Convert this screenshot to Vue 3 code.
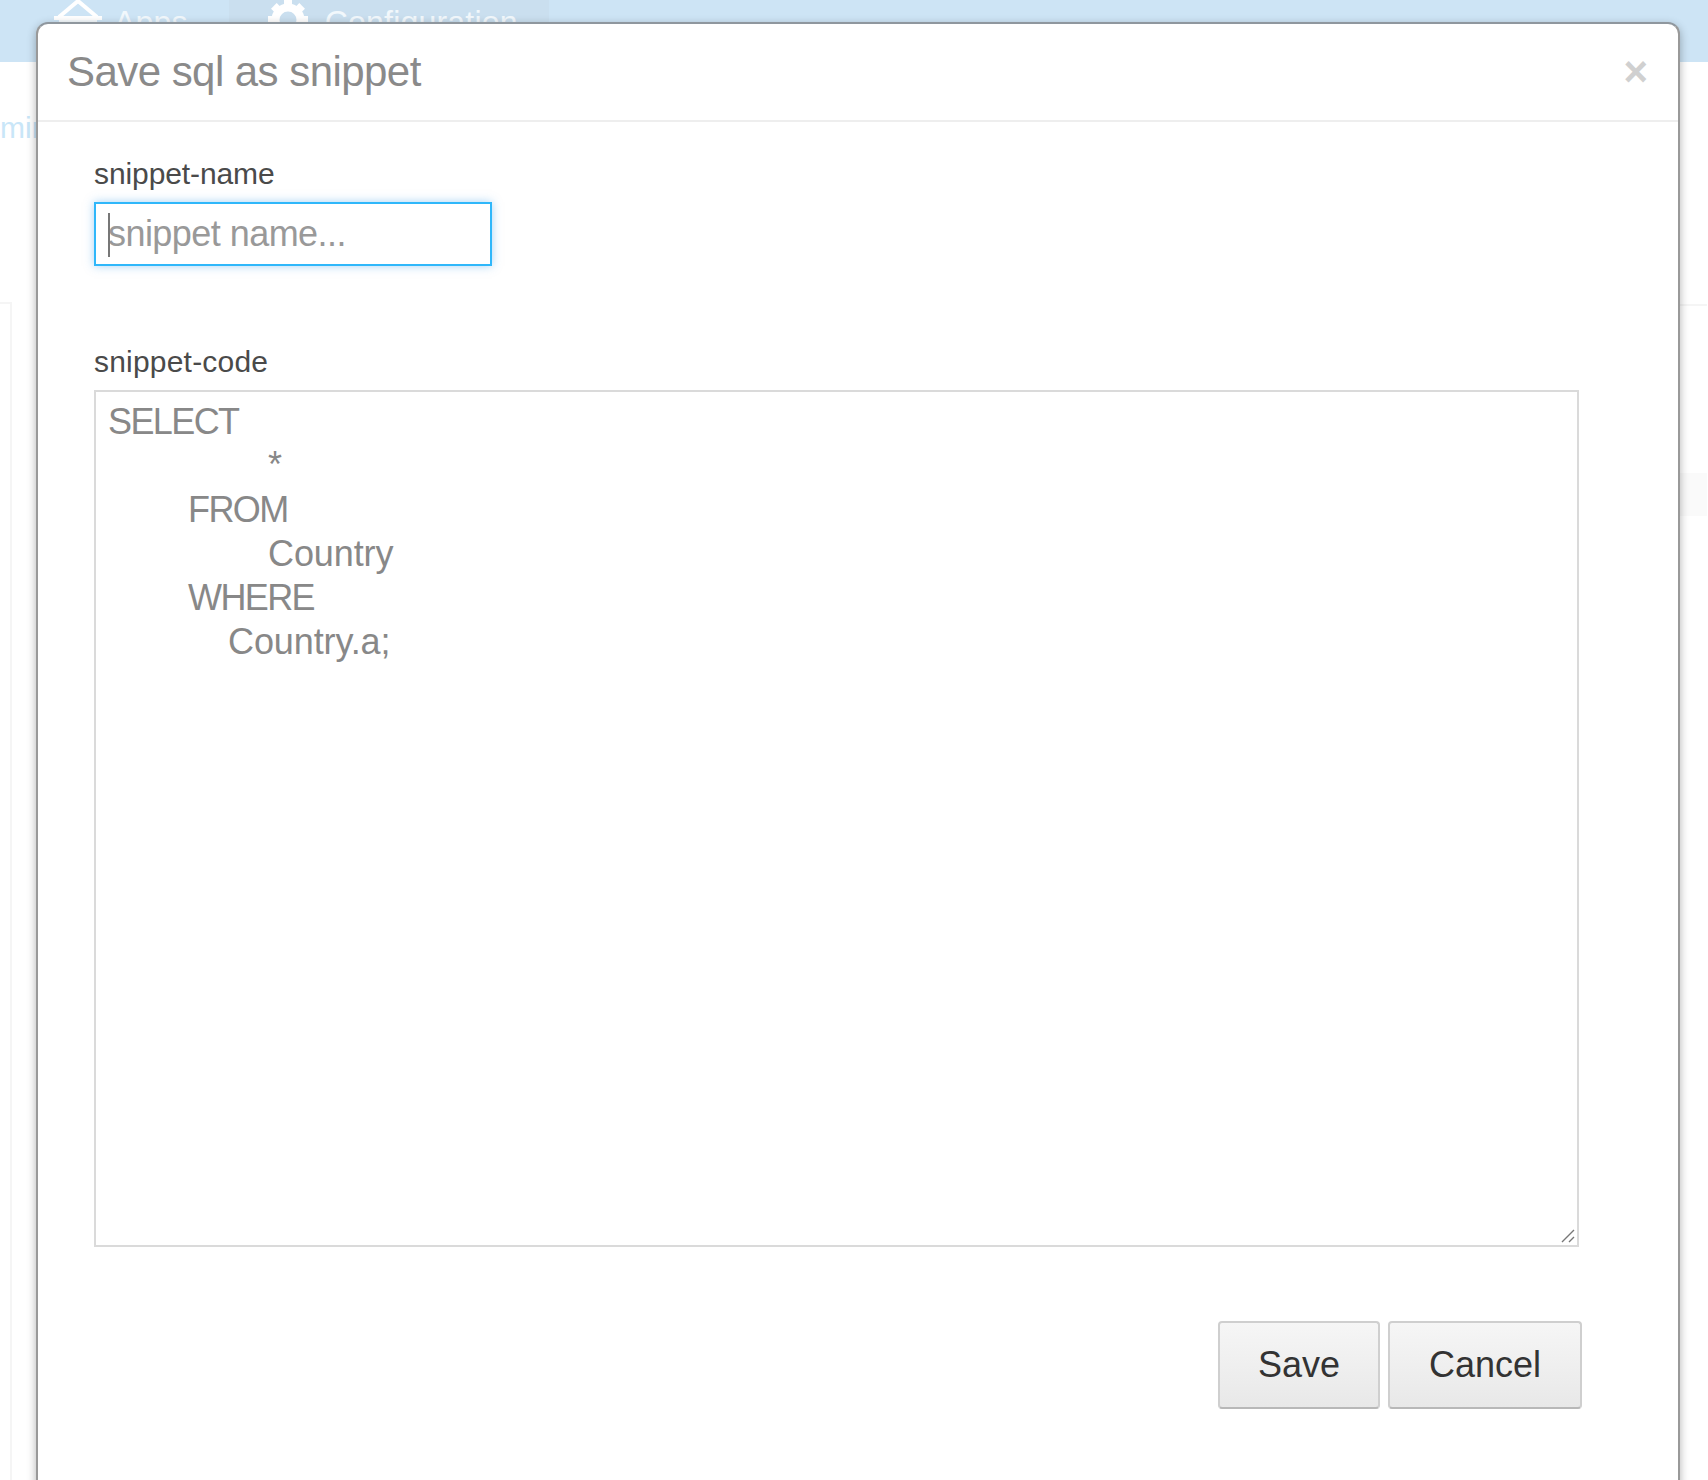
<script setup>
const lines = [
  { text: 'SELECT', cls: 'l0 caps' },
  { text: '*', cls: 'l2 star' },
  { text: 'FROM', cls: 'l1 caps' },
  { text: 'Country', cls: 'l2' },
  { text: 'WHERE', cls: 'l1 caps' },
  { text: 'Country.a;', cls: 'l3' }
];
</script>

<template>
  <div class="page">
    <header class="topbar">
      <div class="nav-item">
        <svg class="home" width="48" height="30" viewBox="0 0 48 30"><path d="M5 17 L24 1 L43 17" fill="none" stroke="#fff" stroke-width="4"/><rect x="0" y="16" width="48" height="4" fill="#fff"/><rect x="5" y="20" width="38" height="10" fill="#f4f9fc"/></svg>
        <span>Apps</span>
      </div>
      <div class="nav-item active">
        <svg class="gear" width="42" height="40" viewBox="0 0 42 40"><circle cx="21" cy="20" r="12.5" fill="none" stroke="#fff" stroke-width="8"/><g fill="#fff"><rect x="17" y="0" width="8" height="8"/><rect x="17" y="0" width="8" height="8" transform="rotate(45 21 20)"/><rect x="17" y="0" width="8" height="8" transform="rotate(-45 21 20)"/><rect x="17" y="0" width="8" height="8" transform="rotate(90 21 20)"/><rect x="17" y="0" width="8" height="8" transform="rotate(-90 21 20)"/></g></svg>
        <span>Configuration</span>
      </div>
    </header>
    <span class="peek">min</span>
    <div class="side-panel"></div>
    <div class="right-line"></div>
    <div class="right-row"></div>

    <section class="modal">
      <div class="modal-header">
        <h3>Save sql as snippet</h3>
        <span class="close">×</span>
      </div>
      <div class="modal-body">
        <label>snippet-name</label>
        <div class="name-input">
          <i class="caret"></i>
          <span>snippet name...</span>
        </div>
        <label class="code-label">snippet-code</label>
        <div class="code-box">
          <div v-for="l in lines" :key="l.text" class="code-line" :class="l.cls">{{ l.text }}</div>
          <svg class="grip" width="16" height="16" viewBox="0 0 16 16"><path d="M2 14 L14 2 M9 14 L14 9" stroke="#777" stroke-width="1.4" fill="none"/></svg>
        </div>
        <div class="actions">
          <button class="btn save">Save</button>
          <button class="btn cancel">Cancel</button>
        </div>
      </div>
    </section>
  </div>
</template>

<style>
html, body { margin: 0; background: #fff; }
</style>

<style scoped>
.page { position: relative; width: 1708px; height: 1480px; overflow: hidden; background: #fff; font-family: "Liberation Sans", Arial, sans-serif; }
.topbar { height: 62px; background: #cde4f5; display: flex; padding-left: 54px; }
.nav-item { display: flex; align-items: flex-start; gap: 12px; font-size: 32px; height: 62px; }
.nav-item span { line-height: 38px; margin-top: 3px; color: #f2f8fc; letter-spacing: 0.2px; }
.nav-item.active { background: #cadfef; margin-left: 41px; padding: 0 31px 0 38px; gap: 16px; }
.peek { position: absolute; left: 0; top: 110px; font-size: 30px; line-height: 36px; color: #c9e6f8; }
.side-panel { position: absolute; left: -2px; top: 302px; width: 14px; height: 1180px; border: 2px solid #f5f5f5; box-sizing: border-box; }
.right-line { position: absolute; left: 1680px; right: 1px; top: 304px; height: 2px; background: #f5f5f5; }
.right-row { position: absolute; left: 1680px; right: 1px; top: 473px; height: 43px; background: #fafafa; }
.modal { position: absolute; left: 36px; top: 22px; width: 1644px; height: 1500px; box-sizing: border-box; background: #fff; border: 2px solid #999; border-top-color: #8f979e; border-bottom: 0; border-radius: 12px; box-shadow: 0 3px 10px rgba(0,0,0,0.3); }
.modal-header { height: 98px; box-sizing: border-box; border-bottom: 2px solid #eeeeee; padding: 0 28px 0 29px; display: flex; justify-content: space-between; align-items: flex-start; }
h3 { margin: 24px 0 0; font-size: 42px; line-height: 48px; font-weight: 400; letter-spacing: -0.55px; color: #8a8a8a; }
.close { font-size: 42px; font-weight: 700; line-height: 46px; margin: 25px 2px 0 0; color: #d0d0d0; }
.modal-body { padding: 35px 0 0 56px; position: relative; }
label { display: block; font-size: 30px; line-height: 34px; color: #4a4a4a; letter-spacing: -0.1px; }
.name-input { position: relative; margin-top: 11px; width: 398px; height: 64px; box-sizing: border-box; border: 2px solid #2fb7fa; box-shadow: 0 0 9px rgba(82,168,236,0.5); display: flex; align-items: center; padding-left: 12px; color: #999; font-size: 36px; letter-spacing: -0.55px; }
.caret { position: absolute; left: 12px; top: 9px; width: 1.5px; height: 44px; background: #777; }
.code-label { margin-top: 79px; letter-spacing: 0.2px; }
.code-box { position: relative; margin-top: 11px; width: 1485px; height: 857px; box-sizing: border-box; border: 2px solid #dadada; padding: 8px 12px; color: #888; font-size: 36px; letter-spacing: -0.1px; }
.code-line { line-height: 44px; height: 44px; }
.caps { letter-spacing: -1.6px; }
.star { line-height: 41px; }
.l1 { padding-left: 80px; }
.l2 { padding-left: 160px; }
.l3 { padding-left: 120px; }
.grip { position: absolute; right: 1px; bottom: 1px; }
.actions { display: flex; gap: 8px; margin-top: 74px; width: 1488px; justify-content: flex-end; }
.btn { height: 88px; box-sizing: border-box; border: 2px solid #cfcfcf; border-bottom-color: #b8b8b8; border-radius: 4px; background: linear-gradient(#f6f6f6, #e8e8e8); color: #333; font-family: inherit; font-size: 36px; padding: 0; }
.save { width: 162px; }
.cancel { width: 194px; }
</style>
